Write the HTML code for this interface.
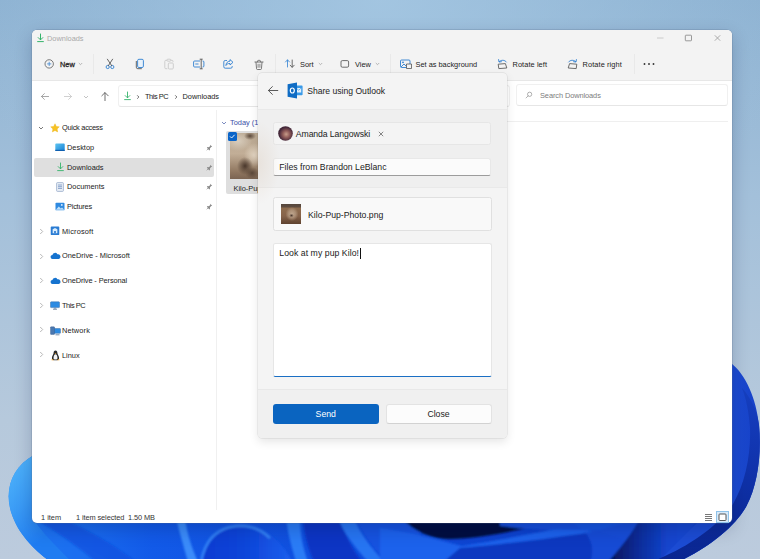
<!DOCTYPE html>
<html lang="en">
<head>
<meta charset="utf-8">
<title>Downloads - Share using Outlook</title>
<style>
*{box-sizing:border-box;margin:0;padding:0}
html,body{width:760px;height:559px;overflow:hidden;background:#a9c3da}
body{position:relative;font-family:"Liberation Sans",sans-serif;font-size:7.4px;color:#1b1b1b;line-height:1}
.abs{position:absolute}
.t{position:absolute;white-space:nowrap;line-height:10px;height:10px;margin-top:-5px}
#wall{position:absolute;left:0;top:0;width:760px;height:559px}
#win{position:absolute;left:32px;top:29.500px;width:700px;height:493.500px;background:#fff;border-radius:5px;overflow:hidden;box-shadow:0 0 0 .5px rgba(90,110,140,.45),0 6px 18px rgba(0,20,60,.22)}
#hdr{position:absolute;left:0;top:0;width:700px;height:51.500px;background:#f3f3f3;border-bottom:1px solid #e7e7e7}
.sep{position:absolute;top:24px;width:1px;height:20px;background:#e9e9e9}
.ico{position:absolute;overflow:visible}
#side .t{color:#1b1b1b}
#dlg{position:absolute;left:258px;top:73px;width:249px;height:365px;background:#f4f4f4;border-radius:4px;box-shadow:0 0 0 .5px rgba(0,0,0,.10),0 4px 10px rgba(0,0,0,.10);overflow:hidden;font-size:8.7px}
#dlg .t{line-height:12px;height:12px;margin-top:-6px}
</style>
</head>
<body>
<svg id="wall" viewBox="0 0 760 559">
<defs>
<linearGradient id="sky" x1="0" y1="0" x2="0" y2="1">
<stop offset="0" stop-color="#8db2d2"/><stop offset=".35" stop-color="#a3c0da"/><stop offset=".75" stop-color="#b6c9dc"/><stop offset="1" stop-color="#bccbdd"/>
</linearGradient>
<radialGradient id="skyglow" cx=".5" cy="0" r=".55">
<stop offset="0" stop-color="#a6c8e3" stop-opacity=".85"/><stop offset="1" stop-color="#a6c8e3" stop-opacity="0"/>
</radialGradient>
<linearGradient id="mass" x1="0" y1="0" x2="760" y2="0" gradientUnits="userSpaceOnUse">
<stop offset="0" stop-color="#2f95f8"/><stop offset=".06" stop-color="#1d74f2"/><stop offset=".2" stop-color="#125ae8"/><stop offset=".5" stop-color="#0f4ada"/><stop offset=".8" stop-color="#0c3cc6"/><stop offset="1" stop-color="#1440c8"/>
</linearGradient>
<linearGradient id="lp" x1="6" y1="478" x2="52" y2="530" gradientUnits="userSpaceOnUse">
<stop offset="0" stop-color="#4aaef9"/><stop offset=".45" stop-color="#3a9bf6"/><stop offset="1" stop-color="#1f7cf1"/>
</linearGradient>
<linearGradient id="rp" x1="732" y1="0" x2="760" y2="0" gradientUnits="userSpaceOnUse">
<stop offset="0" stop-color="#1c4cd4"/><stop offset="1" stop-color="#1640c6"/>
</linearGradient>
<linearGradient id="pa" x1="205" y1="0" x2="290" y2="0" gradientUnits="userSpaceOnUse"><stop offset="0" stop-color="#0a3cd2"/><stop offset=".5" stop-color="#0e46da"/><stop offset="1" stop-color="#1b5eec"/></linearGradient>
<linearGradient id="cr" x1="612" y1="0" x2="680" y2="0" gradientUnits="userSpaceOnUse"><stop offset="0" stop-color="#06175e"/><stop offset=".35" stop-color="#0a2a94"/><stop offset=".8" stop-color="#1344cc"/><stop offset="1" stop-color="#1446d0"/></linearGradient>
<linearGradient id="rb" x1="0" y1="390" x2="0" y2="560" gradientUnits="userSpaceOnUse"><stop offset="0" stop-color="#163fc0"/><stop offset=".45" stop-color="#1033ac"/><stop offset="1" stop-color="#0a2690"/></linearGradient>
<filter id="b1" x="-5%" y="-5%" width="110%" height="110%"><feGaussianBlur stdDeviation="1.300"/></filter>
</defs>
<rect width="760" height="559" fill="url(#sky)"/>
<rect width="760" height="559" fill="url(#skyglow)"/>
<!-- main bloom mass -->
<path d="M34,455 C14,466 5,486 10,508 C15,530 32,548 48,560 L682,560 C713,545 737,524 747,505 L731,420 L600,420 L200,420 Z" fill="url(#mass)"/>
<!-- left light petal -->
<path d="M34,455 C14,466 5,486 10,508 C15,530 32,548 48,560 L70,560 C56,546 42,532 34,520 L34,460 Z" fill="url(#lp)"/>
<path d="M34,520 C42,532 56,546 70,560 L110,560 C84,546 54,530 34,514 Z" fill="#1c70f0" opacity=".6"/>
<!-- bottom strip petals -->
<g filter="url(#b1)">
<path d="M60,518 C90,530 120,548 140,565 L100,565 C80,548 60,534 40,522 Z" fill="#0b4ede" opacity=".7"/>
<path d="M176,518 C180,534 184,548 188,562 L198,562 C192,548 187,534 185,518 Z" fill="#3a8cfa"/>
<path d="M200,562 C204,540 216,527 236,525 C262,524 282,540 292,562 Z" fill="url(#pa)"/>
<path d="M201,562 C205,540 216,528 236,526 C250,525 262,530 270,538" fill="none" stroke="#3484f8" stroke-width="2.500"/>
<path d="M286,518 C288,535 292,548 296,562 L308,562 C303,548 300,534 300,518 Z" fill="#2a7cf6"/>
<path d="M303,518 C304,534 308,548 314,562 L362,562 C352,548 344,534 340,518 Z" fill="#0a36c4"/>
<path d="M338,518 C344,534 356,548 368,562 L384,562 C372,548 360,534 354,518 Z" fill="#2674f2"/>
<path d="M356,518 C362,534 374,548 386,562 L420,562 L420,518 Z" fill="#1252e0"/>
<path d="M380,528 C410,532 440,540 462,546 C500,540 540,532 575,525 L600,535 C560,548 500,556 440,562 L380,562 Z" fill="#1c62ec"/>
<path d="M460,548 C500,545 560,537 600,531 L640,545 L620,565 L440,565 Z" fill="#0a38c0"/>
<path d="M402,518 C414,532 432,539 450,539 C484,538 524,530 562,518 Z" fill="#04103f"/>
<path d="M500,518 L640,518 L600,530 C560,530 530,530 500,526 Z" fill="#1450dc"/>
<path d="M640,518 C632,534 620,548 608,562 L672,562 C682,548 690,534 698,518 Z" fill="url(#cr)"/>
<path d="M570,518 L640,518 C632,534 620,548 608,562 L590,562 C596,548 590,530 570,522 Z" fill="#1a58e2" opacity=".6"/>
</g>
<!-- right petal -->
<path d="M731,363 C746,375 756,398 759,425 C762,455 757,486 747,505 C737,524 713,545 682,560 L660,560 L700,520 L731,500 Z" fill="url(#rp)"/>
<path d="M759,425 C762,455 757,486 747,505 C737,524 713,545 682,560 L656,560 C690,546 718,526 733,504 C745,484 751,455 750,428 C749,412 746,398 742,388 C751,398 757,410 759,425 Z" fill="url(#rb)"/>
</svg>

<div id="win"><div id="hdr"></div></div>

<div id="ui" class="abs" style="left:0;top:0;width:760px;height:559px">
<!-- title bar -->
<svg class="ico" style="left:36px;top:33px" width="9" height="10" viewBox="0 0 9 10"><path d="M4.5 1v5.6M2.2 4.6l2.3 2.3 2.3-2.3" fill="none" stroke="#35b36b" stroke-width="1" stroke-linecap="round" stroke-linejoin="round"/><path d="M1.6 8.6h5.8" stroke="#35b36b" stroke-width="1" stroke-linecap="round"/></svg>
<span class="t" id="ttl" style="left:47px;top:38.5px;color:#a9a9a9">Downloads</span>
<svg class="ico" style="left:655px;top:33px" width="70" height="10" viewBox="0 0 70 10"><g fill="none" stroke-width=".9"><path d="M2 5h6.500" stroke="#c6c6c6"/><rect x="30.300" y="2.200" width="6.200" height="5.600" rx=".6" stroke="#8e8e8e"/><path d="M59.800 2.300l5.400 5.400M65.200 2.300l-5.400 5.400" stroke="#a0a0a0"/></g></svg>

<!-- toolbar -->
<svg class="ico" style="left:43px;top:58px" width="12" height="12" viewBox="0 0 12 12"><circle cx="6.200" cy="5.900" r="4.200" fill="none" stroke="#5a5a5a" stroke-width=".8"/><path d="M6.200 3.800v4.200M4.100 5.900h4.200" stroke="#3f86d2" stroke-width=".8"/></svg>
<span class="t" id="tnew" style="left:60px;top:64.500px;-webkit-text-stroke:.3px #2a2a2a;color:#2a2a2a">New</span>
<svg class="ico" style="left:78px;top:62px" width="5" height="4" viewBox="0 0 5 4"><path d="M.8 1l1.700 1.700L4.200 1" fill="none" stroke="#9a9a9a" stroke-width=".7"/></svg>
<div class="sep" style="left:93px;top:54px"></div>
<!-- cut -->
<svg class="ico" style="left:104px;top:58px" width="12" height="12" viewBox="0 0 12 12"><g fill="none" stroke="#2f7fd0" stroke-width=".9"><circle cx="3.700" cy="9" r="1.600"/><circle cx="8.300" cy="9" r="1.600"/></g><path d="M3.400 1.200l4.300 6.500M8.600 1.200L4.300 7.700" stroke="#555" stroke-width=".9" stroke-linecap="round"/></svg>
<!-- copy -->
<svg class="ico" style="left:134px;top:58px" width="12" height="12" viewBox="0 0 12 12"><rect x="3.600" y="1.300" width="5.800" height="8.200" rx="1.300" fill="#e8f2fb" stroke="#2f7fd0" stroke-width=".9"/><path d="M2.300 3v6.200a1.500 1.500 0 0 0 1.500 1.500h4" fill="none" stroke="#555" stroke-width=".9"/></svg>
<!-- paste (disabled) -->
<svg class="ico" style="left:163px;top:58px" width="12" height="12" viewBox="0 0 12 12"><g fill="none" stroke="#c9c9c9" stroke-width=".9"><path d="M4 2.300H2.800a1 1 0 0 0-1 1v6.400a1 1 0 0 0 1 1h1.500M7.800 2.300H9a1 1 0 0 1 1 1v.8"/><rect x="4" y="1.200" width="3.800" height="2" rx=".8"/><rect x="5.300" y="5" width="5" height="6" rx="1"/></g></svg>
<!-- rename -->
<svg class="ico" style="left:192px;top:58px" width="13" height="12" viewBox="0 0 13 12"><path d="M8 3H2.600a1 1 0 0 0-1 1v4a1 1 0 0 0 1 1H8M10.500 3h.4a1 1 0 0 1 1 1v4a1 1 0 0 1-1 1h-.4" fill="none" stroke="#2f7fd0" stroke-width=".9"/><path d="M7.700 1.200h3M7.700 10.800h3M9.200 1.200v9.600" stroke="#555" stroke-width=".9"/><path d="M3.300 6h3.200" stroke="#2f7fd0" stroke-width=".9"/></svg>
<!-- share -->
<svg class="ico" style="left:222px;top:58px" width="13" height="12" viewBox="0 0 13 12"><path d="M5 2.500H3.200a1.400 1.400 0 0 0-1.400 1.400v4.900a1.400 1.400 0 0 0 1.400 1.400h5.600a1.400 1.400 0 0 0 1.400-1.400V8" fill="none" stroke="#2f7fd0" stroke-width=".9"/><path d="M8 1.600l3 2.700-3 2.700V5.500C6 5.400 4.800 6 3.900 7.500 4.100 5 5.400 3.300 8 3.100z" fill="none" stroke="#2f7fd0" stroke-width=".9" stroke-linejoin="round"/></svg>
<!-- delete -->
<svg class="ico" style="left:252.500px;top:58.500px" width="12" height="12" viewBox="0 0 12 12"><path d="M1.900 3h8.200M4.600 2.900V2.100a.7.700 0 0 1 .7-.7h1.400a.7.700 0 0 1 .7.700v.8M3 3.300l.55 6.400a.9.900 0 0 0 .9.800h3.100a.9.900 0 0 0 .9-.8L9 3.300" fill="none" stroke="#5a5a5a" stroke-width=".8" stroke-linecap="round"/><path d="M5.100 5.200v3.200M6.900 5.200v3.200" stroke="#5a5a5a" stroke-width=".7" stroke-linecap="round"/></svg>
<div class="sep" style="left:275px;top:54px"></div>
<!-- sort -->
<svg class="ico" style="left:284px;top:58.300px" width="12" height="12" viewBox="0 0 12 12"><path d="M3.500 9V2M1.500 4l2-2.200 2 2.200" fill="none" stroke="#3a86d4" stroke-width=".85" stroke-linecap="round" stroke-linejoin="round"/><path d="M8.200 2v7M6.200 7.200l2 2.200 2-2.200" fill="none" stroke="#555" stroke-width=".85" stroke-linecap="round" stroke-linejoin="round"/></svg>
<span class="t" id="tsort" style="left:300px;top:64.500px">Sort</span>
<svg class="ico" style="left:318px;top:62px" width="5" height="4" viewBox="0 0 5 4"><path d="M.8 1l1.700 1.700L4.200 1" fill="none" stroke="#9a9a9a" stroke-width=".7"/></svg>
<!-- view -->
<svg class="ico" style="left:339px;top:58px" width="12" height="12" viewBox="0 0 12 12"><rect x="2" y="2.600" width="7.600" height="6.600" rx="1.300" fill="none" stroke="#555" stroke-width=".85"/></svg>
<span class="t" id="tview" style="left:355px;top:64.500px">View</span>
<svg class="ico" style="left:375px;top:62px" width="5" height="4" viewBox="0 0 5 4"><path d="M.8 1l1.700 1.700L4.200 1" fill="none" stroke="#9a9a9a" stroke-width=".7"/></svg>
<div class="sep" style="left:390px;top:54px"></div>
<!-- set as background -->
<svg class="ico" style="left:399px;top:58px" width="13" height="12" viewBox="0 0 13 12"><rect x="1.500" y="2" width="9.500" height="7.500" rx="1" fill="none" stroke="#2f7fd0" stroke-width=".9"/><path d="M2 9l3-3 2.500 2.500" fill="none" stroke="#2f7fd0" stroke-width=".9"/><circle cx="4" cy="4.300" r=".9" fill="#2f7fd0"/><path d="M7.500 6h5v4.500h-5z" fill="#f3f3f3" stroke="#555" stroke-width=".8"/></svg>
<span class="t" id="tbg" style="left:415.500px;top:64.500px">Set as background</span>
<!-- rotate left -->
<svg class="ico" style="left:496px;top:58px" width="13" height="12" viewBox="0 0 13 12"><path d="M3.300 3.600C5 1.800 8.600 1.600 10.400 4" fill="none" stroke="#2f7fd0" stroke-width=".9" stroke-linecap="round"/><path d="M2.600 1.600l.4 2.400 2.400-.3" fill="none" stroke="#2f7fd0" stroke-width=".9" stroke-linecap="round" stroke-linejoin="round"/><path d="M2.200 6.200l7.200-.6 1.400 4.400-8 .6z" fill="none" stroke="#555" stroke-width=".85" stroke-linejoin="round"/></svg>
<span class="t" id="trl" style="letter-spacing:0.08px;left:512.500px;top:64.500px">Rotate left</span>
<!-- rotate right -->
<svg class="ico" style="left:566px;top:58px" width="13" height="12" viewBox="0 0 13 12"><path d="M9.700 3.600C8 1.800 4.400 1.600 2.600 4" fill="none" stroke="#2f7fd0" stroke-width=".9" stroke-linecap="round"/><path d="M10.400 1.600L10 4l-2.400-.3" fill="none" stroke="#2f7fd0" stroke-width=".9" stroke-linecap="round" stroke-linejoin="round"/><path d="M10.800 6.200l-7.200-.6L2.200 10l8 .6z" fill="none" stroke="#555" stroke-width=".85" stroke-linejoin="round"/></svg>
<span class="t" id="trr" style="letter-spacing:0.1px;left:582.500px;top:64.500px">Rotate right</span>
<div class="sep" style="left:634px;top:54px"></div>
<svg class="ico" style="left:643px;top:62px" width="12" height="4" viewBox="0 0 12 4"><g fill="#333"><circle cx="1.500" cy="2" r=".95"/><circle cx="6" cy="2" r=".95"/><circle cx="10.500" cy="2" r=".95"/></g></svg>

<!-- address row -->
<svg class="ico" style="left:39.500px;top:91.500px" width="10" height="9" viewBox="0 0 11 10"><path d="M9.500 5H1.800M4.800 1.800L1.600 5l3.200 3.200" fill="none" stroke="#8d8d8d" stroke-width=".85" stroke-linecap="round" stroke-linejoin="round"/></svg>
<svg class="ico" style="left:62.500px;top:91.500px" width="10" height="9" viewBox="0 0 11 10"><path d="M1.500 5h7.700M6.200 1.800L9.400 5 6.200 8.200" fill="none" stroke="#c2c2c2" stroke-width=".85" stroke-linecap="round" stroke-linejoin="round"/></svg>
<svg class="ico" style="left:82.5px;top:94.5px" width="6" height="4" viewBox="0 0 6 4"><path d="M1 1l2 2 2-2" fill="none" stroke="#b5b5b5" stroke-width=".8"/></svg>
<svg class="ico" style="left:99.500px;top:90.500px" width="10" height="11" viewBox="0 0 10 11"><path d="M5 9.600V1.800M1.800 4.800L5 1.600l3.200 3.200" fill="none" stroke="#555" stroke-width=".85" stroke-linecap="round" stroke-linejoin="round"/></svg>
<div class="abs" style="left:117.500px;top:85px;width:392px;height:22px;border:1px solid #f0f0f0;border-bottom-color:#e6e6e6;border-radius:3px;background:#fff"></div>
<svg class="ico" style="left:122.500px;top:91px" width="9" height="10" viewBox="0 0 9 10"><path d="M4.500 1v5.600M2.200 4.600l2.300 2.300 2.300-2.300" fill="none" stroke="#35b36b" stroke-width=".9" stroke-linecap="round" stroke-linejoin="round"/><path d="M1.600 8.600h5.800" stroke="#35b36b" stroke-width=".9" stroke-linecap="round"/></svg>
<svg class="ico" style="left:136px;top:93.5px" width="4" height="6" viewBox="0 0 4 6"><path d="M1.200 1.300l1.700 1.700-1.700 1.700" fill="none" stroke="#6a6a6a" stroke-width=".95"/></svg>
<span class="t" id="apc" style="letter-spacing:-0.45px;left:145px;top:96.500px">This PC</span>
<svg class="ico" style="left:173.5px;top:93.5px" width="4" height="6" viewBox="0 0 4 6"><path d="M1.200 1.300l1.700 1.700-1.700 1.700" fill="none" stroke="#6a6a6a" stroke-width=".95"/></svg>
<span class="t" id="adl" style="left:182.500px;top:96.500px">Downloads</span>
<div class="abs" style="left:515.500px;top:84.200px;width:212.500px;height:22px;border:1px solid #f0f0f0;border-bottom-color:#e6e6e6;border-radius:3px;background:#fff"></div>
<svg class="ico" style="left:524.500px;top:91.300px" width="8" height="8" viewBox="0 0 9 9"><circle cx="5.200" cy="3.700" r="2.400" fill="none" stroke="#8a8a8a" stroke-width=".75"/><path d="M3.500 5.500L1.200 7.800" stroke="#8a8a8a" stroke-width=".75" stroke-linecap="round"/></svg>
<span class="t" id="asrch" style="letter-spacing:-0.08px;left:540px;top:96.300px;color:#7c7c7c">Search Downloads</span>

<!-- sidebar -->
<div class="abs" style="left:216px;top:110px;width:1px;height:400px;background:#f0f0f0"></div>
<div id="side">
<svg class="ico" style="left:38px;top:125.5px" width="6" height="4" viewBox="0 0 6 4"><path d="M1 1l2 2 2-2" fill="none" stroke="#555" stroke-width=".8"/></svg>
<svg class="ico" style="left:50.400px;top:122.600px" width="10" height="10" viewBox="0 0 11 11"><path d="M5.500.8l1.450 3 3.250.45-2.350 2.300.55 3.250L5.500 8.250 2.600 9.800l.55-3.250L.8 4.250l3.250-.45z" fill="#f7c325" stroke="#e8a800" stroke-width=".4" stroke-linejoin="round"/></svg>
<span class="t" id="s0" style="letter-spacing:-0.27px;left:62px;top:127.500px">Quick access</span>

<svg class="ico" style="left:55px;top:143px" width="10" height="9" viewBox="0 0 10 9"><defs><linearGradient id="dsk" x1="0" y1="0" x2="1" y2="1"><stop offset="0" stop-color="#5ec4f0"/><stop offset="1" stop-color="#1681d6"/></linearGradient></defs><rect x=".3" y=".6" width="9.400" height="7.400" rx=".8" fill="url(#dsk)"/><rect x=".3" y="6.800" width="9.400" height="1.200" fill="#0f5fb0"/></svg>
<span class="t" id="s1" style="left:67px;top:147.500px">Desktop</span>
<svg class="ico" style="left:206px;top:143.5px" width="7" height="7" viewBox="0 0 7 7"><path d="M4.200.8l2 2-1 .3-1.300 1.300.1 1.300-.7.700L.9 3.800l.7-.7 1.300.1 1.300-1.300z" fill="#8a8a8a"/><path d="M2.300 4.700L.7 6.300" stroke="#8a8a8a" stroke-width=".7"/></svg>

<div class="abs" style="left:34px;top:158px;width:180px;height:18.500px;background:#dfdfdf;border-radius:2px"></div>
<svg class="ico" style="left:55.500px;top:162px" width="9" height="10" viewBox="0 0 9 10"><path d="M4.500 1v5.600M2.200 4.600l2.300 2.300 2.300-2.300" fill="none" stroke="#35b36b" stroke-width=".9" stroke-linecap="round" stroke-linejoin="round"/><path d="M1.600 8.600h5.800" stroke="#35b36b" stroke-width=".9" stroke-linecap="round"/></svg>
<span class="t" id="s2" style="left:67px;top:167.500px">Downloads</span>
<svg class="ico" style="left:206px;top:163.5px" width="7" height="7" viewBox="0 0 7 7"><path d="M4.200.8l2 2-1 .3-1.300 1.300.1 1.300-.7.700L.9 3.800l.7-.7 1.300.1 1.300-1.300z" fill="#8a8a8a"/><path d="M2.300 4.700L.7 6.300" stroke="#8a8a8a" stroke-width=".7"/></svg>

<svg class="ico" style="left:56px;top:181.500px" width="8" height="10" viewBox="0 0 8 10"><rect x=".6" y=".6" width="6.800" height="8.800" rx=".8" fill="#e9eef6" stroke="#8ea3c4" stroke-width=".7"/><path d="M2 3h4M2 4.700h4M2 6.400h4" stroke="#5f82b8" stroke-width=".7"/></svg>
<span class="t" id="s3" style="left:67px;top:187px">Documents</span>
<svg class="ico" style="left:206px;top:183.0px" width="7" height="7" viewBox="0 0 7 7"><path d="M4.200.8l2 2-1 .3-1.300 1.300.1 1.300-.7.700L.9 3.800l.7-.7 1.300.1 1.300-1.300z" fill="#8a8a8a"/><path d="M2.300 4.700L.7 6.300" stroke="#8a8a8a" stroke-width=".7"/></svg>

<svg class="ico" style="left:55px;top:202px" width="10" height="9" viewBox="0 0 10 9"><rect x=".5" y=".7" width="9" height="7.600" rx=".9" fill="#2f8ae0"/><path d="M.8 7.800l3-3.200 2 2 1.200-1.100 2.200 2.300z" fill="#bfe0fa"/><circle cx="6.800" cy="2.900" r=".9" fill="#e6f3ff"/></svg>
<span class="t" id="s4" style="letter-spacing:-0.22px;left:67px;top:206.500px">Pictures</span>
<svg class="ico" style="left:206px;top:202.5px" width="7" height="7" viewBox="0 0 7 7"><path d="M4.200.8l2 2-1 .3-1.300 1.300.1 1.300-.7.700L.9 3.800l.7-.7 1.300.1 1.300-1.300z" fill="#8a8a8a"/><path d="M2.300 4.700L.7 6.300" stroke="#8a8a8a" stroke-width=".7"/></svg>

<svg class="ico" style="left:38.7px;top:227.5px" width="5" height="7" viewBox="0 0 5 7"><path d="M1.200 1l2.500 2.500-2.500 2.500" fill="none" stroke="#a6a6a6" stroke-width=".8"/></svg>
<svg class="ico" style="left:50.200px;top:226.300px" width="10" height="9.600" viewBox="0 0 9 9"><rect x=".5" y=".5" width="8" height="8" rx=".8" fill="#2b7cd3"/><path d="M2.300 6.800V3l2.200-1.200L6.700 3v3.800z" fill="#d9ecfc"/><path d="M3.700 6.800V4.600h1.600v2.200" fill="#2b7cd3"/></svg>
<span class="t" id="s5" style="letter-spacing:0.17px;left:62px;top:231.500px">Microsoft</span>

<svg class="ico" style="left:38.7px;top:252.5px" width="5" height="7" viewBox="0 0 5 7"><path d="M1.200 1l2.500 2.500-2.500 2.500" fill="none" stroke="#a6a6a6" stroke-width=".8"/></svg>
<svg class="ico" style="left:49.500px;top:252px" width="11" height="8" viewBox="0 0 11 8"><path d="M2.700 6.900a2 2 0 0 1-.3-4 2.700 2.700 0 0 1 5-.6 2.300 2.300 0 0 1 1.300 4.600z" fill="#1673cf"/></svg>
<span class="t" id="s6" style="left:62px;top:256px">OneDrive - Microsoft</span>

<svg class="ico" style="left:38.7px;top:277.0px" width="5" height="7" viewBox="0 0 5 7"><path d="M1.200 1l2.500 2.500-2.500 2.500" fill="none" stroke="#a6a6a6" stroke-width=".8"/></svg>
<svg class="ico" style="left:49.500px;top:276.500px" width="11" height="8" viewBox="0 0 11 8"><path d="M2.700 6.900a2 2 0 0 1-.3-4 2.700 2.700 0 0 1 5-.6 2.300 2.300 0 0 1 1.300 4.600z" fill="#1673cf"/></svg>
<span class="t" id="s7" style="letter-spacing:-0.1px;left:62px;top:280.500px">OneDrive - Personal</span>

<svg class="ico" style="left:38.7px;top:301.5px" width="5" height="7" viewBox="0 0 5 7"><path d="M1.200 1l2.500 2.500-2.500 2.500" fill="none" stroke="#a6a6a6" stroke-width=".8"/></svg>
<svg class="ico" style="left:50px;top:300.500px" width="10" height="9" viewBox="0 0 10 9"><rect x=".5" y=".8" width="9" height="5.800" rx=".7" fill="#2d8be2" stroke="#3b6ea8" stroke-width=".5"/><path d="M3 8.200h4M5 6.600v1.600" stroke="#55708f" stroke-width=".8"/></svg>
<span class="t" id="s8" style="letter-spacing:-0.45px;left:62px;top:305.500px">This PC</span>

<svg class="ico" style="left:38.7px;top:326.0px" width="5" height="7" viewBox="0 0 5 7"><path d="M1.200 1l2.500 2.500-2.500 2.500" fill="none" stroke="#a6a6a6" stroke-width=".8"/></svg>
<svg class="ico" style="left:49.500px;top:325.700px" width="11" height="10" viewBox="0 0 11 10"><rect x="3.500" y="2.500" width="7" height="4.800" rx=".6" fill="#2d8be2" stroke="#3b6ea8" stroke-width=".5"/><rect x=".5" y=".8" width="4" height="7.600" rx=".5" fill="#4a78b0" stroke="#35598a" stroke-width=".4"/><path d="M5.500 8.800h4" stroke="#55708f" stroke-width=".8"/></svg>
<span class="t" id="s9" style="letter-spacing:0.12px;left:62px;top:330.700px">Network</span>

<svg class="ico" style="left:38.7px;top:351.0px" width="5" height="7" viewBox="0 0 5 7"><path d="M1.200 1l2.500 2.500-2.500 2.500" fill="none" stroke="#a6a6a6" stroke-width=".8"/></svg>
<svg class="ico" style="left:51px;top:349.700px" width="9" height="11" viewBox="0 0 9 11"><path d="M4.500.6c1.300 0 1.900 1 1.900 2.300 0 1.200 1.700 2.800 1.700 5 0 1.400-.7 2.300-3.600 2.300S.9 9.300.9 7.900c0-2.200 1.700-3.800 1.700-5C2.600 1.600 3.200.6 4.500.6z" fill="#2a2a2a"/><path d="M4.500 4.200c1 0 2 1.700 2 3.700 0 1.200-.8 1.700-2 1.700s-2-.5-2-1.700c0-2 1-3.700 2-3.700z" fill="#f4f4f4"/><path d="M3.600 3.300l.9.600.9-.6-.9-.4z" fill="#f0a020"/><path d="M.6 9.600c.6-.7 1.800-.4 2.200.6H.6zM8.400 9.600c-.6-.7-1.800-.4-2.200.6h2.200z" fill="#f0a020"/></svg>
<span class="t" id="s10" style="left:62px;top:355.700px">Linux</span>
</div>

<!-- content -->
<svg class="ico" style="left:221px;top:120.5px" width="6" height="4" viewBox="0 0 6 4"><path d="M1 1l2 2 2-2" fill="none" stroke="#5b6fb0" stroke-width=".8"/></svg>
<span class="t" id="ctoday" style="left:230px;top:122.500px;color:#3b4fa8">Today (1)</span>
<div class="abs" style="left:262px;top:121.300px;width:466px;height:1px;background:#efefef"></div>
<div class="abs" style="left:226px;top:130.500px;width:60px;height:63px;background:#dedede;border-radius:2px"></div>
<div class="abs" id="thumb" style="left:230px;top:133px;width:52px;height:46px;background:radial-gradient(ellipse 8px 9px at 15px 33px,#4a382c 0,rgba(74,56,44,0) 100%),radial-gradient(ellipse 7px 6px at 22px 40px,#5a4638 0,rgba(90,70,56,0) 100%),radial-gradient(ellipse 6px 4px at 20px 3px,#5c4a3c 0,rgba(92,74,60,0) 100%),radial-gradient(ellipse 10px 12px at 24px 22px,#e0d2bf 0,rgba(224,210,191,0) 100%),radial-gradient(ellipse 14px 10px at 8px 8px,#d8cdbd 0,rgba(216,205,189,0) 100%),linear-gradient(180deg,#b9a892 0,#c2ae97 45%,#8f765f 85%,#7b6452 100%)"></div>
<div class="abs" style="left:228px;top:132px;width:8.500px;height:8.500px;background:#0a64c8;border-radius:1.500px"></div>
<svg class="ico" style="left:228px;top:132px" width="8.500" height="8.500" viewBox="0 0 8.500 8.500"><path d="M2 4.400l1.600 1.600L6.600 2.800" fill="none" stroke="#fff" stroke-width=".9"/></svg>
<span class="t" id="cname" style="left:233.500px;top:189px">Kilo-Pup-Photo</span>

<!-- status bar -->
<span class="t" id="st1" style="left:41px;top:517.500px;color:#333">1 item</span>
<span class="t" id="st2" style="letter-spacing:-0.1px;left:76px;top:517.500px;color:#333">1 item selected&nbsp; 1.50 MB</span>
<svg class="ico" style="left:704px;top:512.500px" width="9" height="9" viewBox="0 0 9 9"><path d="M1 1.500h7M1 3.500h7M1 5.500h7M1 7.500h7" stroke="#555" stroke-width=".8"/></svg>
<div class="abs" style="left:716px;top:510.500px;width:13px;height:12px;background:#d8eaf9;border:1px solid #8fc3ea"></div>
<svg class="ico" style="left:718px;top:512.500px" width="9" height="9" viewBox="0 0 9 9"><rect x="1" y="1" width="7" height="6.500" rx=".8" fill="#fff" stroke="#444" stroke-width=".9"/></svg>
</div>

<div id="dlg">
<div class="abs" style="left:0;top:46px;width:26px;height:88px;background:radial-gradient(ellipse 22px 42px at 0 50%,rgba(205,175,145,.2),rgba(205,175,145,0));z-index:1"></div>
<div class="abs" style="left:0;top:36px;width:249px;height:78.500px;background:#efefef;border-top:1px solid #e9e9e9;border-bottom:1px solid #e9e9e9"></div>
<div class="abs" style="left:0;top:315.500px;width:249px;height:50px;background:#f0f0f0;border-top:1px solid #e8e8e8"></div>
<!-- header -->
<svg class="ico" style="left:9px;top:12px" width="12" height="11" viewBox="0 0 12 11"><path d="M10.800 5.500H1.600M5.400 1.600L1.400 5.500l4 3.900" fill="none" stroke="#4a4a4a" stroke-width=".9" stroke-linecap="round" stroke-linejoin="round"/></svg>
<svg class="ico" style="left:28.5px;top:9px" width="16" height="17" viewBox="0 0 16 17"><rect x="7" y="3.600" width="8.600" height="9.600" rx=".8" fill="#3a9ae8"/><path d="M9.200 6h5v4.600h-5z" fill="#e4f1fc"/><path d="M9.200 6l2.500 2.200L14.200 6" fill="none" stroke="#3a9ae8" stroke-width=".7"/><path d="M.6 2.200L10 .5v16L.6 14.800z" fill="#0f6cc4"/><ellipse cx="5.300" cy="8.500" rx="2" ry="2.500" fill="none" stroke="#fff" stroke-width="1.200"/></svg>
<span class="t" id="dttl" style="left:49.2px;top:18px;font-size:8.600px;color:#222">Share using Outlook</span>
<!-- To field -->
<div class="abs" style="left:14.5px;top:48.5px;width:218px;height:23px;background:#f4f4f4;border:1px solid #e6e6e6;border-radius:2.500px"></div>
<svg class="ico" style="left:19.5px;top:53px" width="15" height="15" viewBox="0 0 15 15"><defs><radialGradient id="av" cx=".55" cy=".55" r=".6"><stop offset="0" stop-color="#c79c8a"/><stop offset=".4" stop-color="#8f5a58"/><stop offset=".8" stop-color="#45283a"/><stop offset="1" stop-color="#3a2230"/></radialGradient></defs><circle cx="7.500" cy="7.500" r="7.300" fill="url(#av)"/></svg>
<span class="t" id="dname" style="letter-spacing:-0.1px;left:37.8px;top:60.5px">Amanda Langowski</span>
<svg class="ico" style="left:119.5px;top:57.5px" width="6" height="6" viewBox="0 0 6 6"><path d="M.8.800l4.400 4.400M5.200.800L.8 5.200" stroke="#555" stroke-width=".7"/></svg>
<!-- Subject -->
<div class="abs" style="left:14.5px;top:84.5px;width:218px;height:18px;background:#fbfbfb;border:1px solid #e8e8e8;border-bottom:1px solid #9c9c9c;border-radius:2.500px"></div>
<span class="t" id="dsubj" style="left:21.3px;top:93.8px">Files from Brandon LeBlanc</span>
<!-- Attachment -->
<div class="abs" style="left:14.5px;top:124px;width:219.500px;height:34px;background:#f9f9f9;border:1px solid #e0e0e0;border-radius:2.500px"></div>
<div class="abs" id="thumb2" style="left:23px;top:131px;width:19.700px;height:19.700px;background:radial-gradient(ellipse 2.200px 1.800px at 10.500px 11.500px,#4a382e 0,rgba(74,56,46,0) 100%),radial-gradient(ellipse 6.500px 7px at 11px 10px,#bfa78f 0,rgba(191,167,143,.6) 55%,rgba(191,167,143,0) 100%),linear-gradient(180deg,#55463c 0,#5e4c40 13%,#8e6c4e 22%,#86634a 60%,#5e422f 100%)"></div>
<span class="t" id="dfile" style="left:50px;top:142px">Kilo-Pup-Photo.png</span>
<!-- Message -->
<div class="abs" style="left:14.5px;top:170px;width:219px;height:134px;background:#fff;border:1px solid #e6e6e6;border-bottom:1.500px solid #1a6fc4;border-radius:2.500px"></div>
<span class="t" id="dmsg" style="letter-spacing:.05px;left:21.3px;top:180px">Look at my pup Kilo!</span>
<div class="abs" style="left:101.8px;top:174.5px;width:.8px;height:11px;background:#111"></div>
<!-- Buttons -->
<div class="abs" style="left:14.5px;top:331px;width:106.500px;height:19.500px;background:#0a64c0;border-radius:3px"></div>
<span class="t" id="dsend" style="left:14.5px;top:340.8px;width:106.500px;text-align:center;color:#fff">Send</span>
<div class="abs" style="left:128px;top:331px;width:105.500px;height:19.500px;background:#fcfcfc;border:1px solid #e3e3e3;border-bottom-color:#d2d2d2;border-radius:3px"></div>
<span class="t" id="dclose" style="left:128px;top:340.8px;width:105px;text-align:center;color:#222">Close</span>
</div>
</body>
</html>
